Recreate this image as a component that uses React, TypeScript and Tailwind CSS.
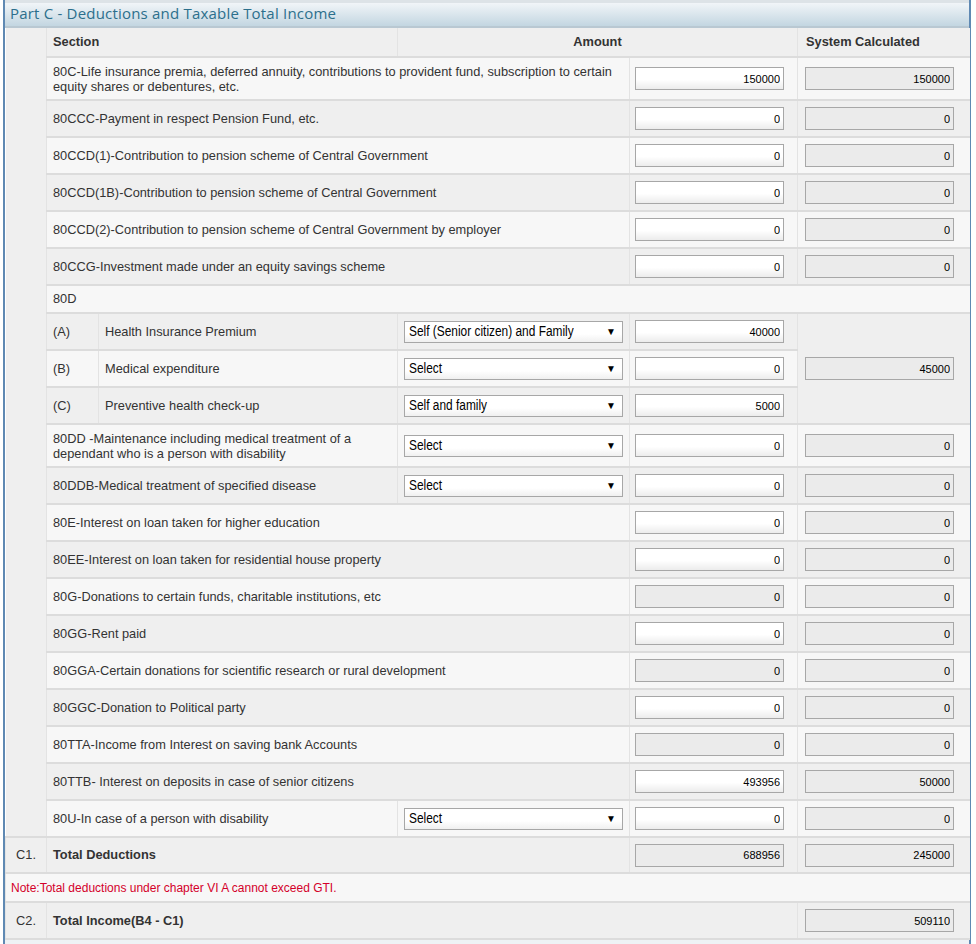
import * as React from "react";

type Row =
  | { kind: "plain"; label: string; amount: string; sys: string; ro?: boolean }
  | { kind: "select"; label: string; option: string; amount: string; sys: string };

const topRows: Row[] = [
  {
    kind: "plain",
    label:
      "80C-Life insurance premia, deferred annuity, contributions to provident fund, subscription to certain equity shares or debentures, etc.",
    amount: "150000",
    sys: "150000",
  },
  { kind: "plain", label: "80CCC-Payment in respect Pension Fund, etc.", amount: "0", sys: "0" },
  { kind: "plain", label: "80CCD(1)-Contribution to pension scheme of Central Government", amount: "0", sys: "0" },
  { kind: "plain", label: "80CCD(1B)-Contribution to pension scheme of Central Government", amount: "0", sys: "0" },
  { kind: "plain", label: "80CCD(2)-Contribution to pension scheme of Central Government by employer", amount: "0", sys: "0" },
  { kind: "plain", label: "80CCG-Investment made under an equity savings scheme", amount: "0", sys: "0" },
];

const subRows = [
  { tag: "(A)", label: "Health Insurance Premium", option: "Self (Senior citizen) and Family", amount: "40000" },
  { tag: "(B)", label: "Medical expenditure", option: "Select", amount: "0" },
  { tag: "(C)", label: "Preventive health check-up", option: "Self and family", amount: "5000" },
];

const bottomRows: Row[] = [
  {
    kind: "select",
    label: "80DD -Maintenance including medical treatment of a dependant who is a person with disability",
    option: "Select",
    amount: "0",
    sys: "0",
  },
  { kind: "select", label: "80DDB-Medical treatment of specified disease", option: "Select", amount: "0", sys: "0" },
  { kind: "plain", label: "80E-Interest on loan taken for higher education", amount: "0", sys: "0" },
  { kind: "plain", label: "80EE-Interest on loan taken for residential house property", amount: "0", sys: "0" },
  { kind: "plain", label: "80G-Donations to certain funds, charitable institutions, etc", amount: "0", sys: "0", ro: true },
  { kind: "plain", label: "80GG-Rent paid", amount: "0", sys: "0" },
  { kind: "plain", label: "80GGA-Certain donations for scientific research or rural development", amount: "0", sys: "0", ro: true },
  { kind: "plain", label: "80GGC-Donation to Political party", amount: "0", sys: "0" },
  { kind: "plain", label: "80TTA-Income from Interest on saving bank Accounts", amount: "0", sys: "0", ro: true },
  { kind: "plain", label: "80TTB- Interest on deposits in case of senior citizens", amount: "493956", sys: "50000" },
  { kind: "select", label: "80U-In case of a person with disability", option: "Select", amount: "0", sys: "0" },
];

const LIGHT = "bg-[#f7f7f7]";
const DARK = "bg-[#efefef]";
const cell = "border-b-2 border-b-[#dcdcdc] border-l border-l-[#e3e3e3] align-middle";

function NumBox({ value, ro }: { value: string; ro?: boolean }) {
  return (
    <input
      readOnly
      value={value}
      className={`block h-[23px] w-[149px] border border-[#a7a7a7] pr-[3px] text-right text-[11px] text-black outline-none ${
        ro ? "bg-[#ebebeb]" : "bg-linear-to-b from-white from-55% to-[#ececec]"
      }`}
      style={{ fontFamily: '"Liberation Sans", Arial, sans-serif' }}
    />
  );
}

function SelectBox({ value }: { value: string }) {
  return (
    <div className="flex h-[22px] w-[219px] items-center justify-between overflow-hidden border border-[#a7a7a7] bg-linear-to-b from-white from-60% to-[#f0f0f0] pl-[4px] pr-[6px] text-[14px] text-black">
      <span className="origin-left scale-x-[0.85] whitespace-nowrap">{value}</span>
      <span className="text-[10px] leading-none">▼</span>
    </div>
  );
}

export default function App() {
  let stripe = 0;
  const bg = () => (stripe++ % 2 === 0 ? LIGHT : DARK);

  return (
    <div
      className="min-h-screen bg-white text-[12.8px] text-[#333]"
      style={{ fontFamily: '"Liberation Sans", Arial, sans-serif' }}
    >
      <div className="ml-[3px] w-[968px] border-x-2 border-x-[#5f89b3]">
        <div
          className="flex h-[28px] items-center border-t-[3px] border-t-[#dde3e7] border-b-2 border-b-[#b9c8d2] bg-linear-to-b from-[#f1f5f8] to-[#c3d6e1] pl-[5px] pb-[2px] text-[15px] tracking-[0.2px] text-[#2c6f8c]"
          style={{ fontFamily: '"Open Sans", Lato, sans-serif' }}
        >
          Part C - Deductions and Taxable Total Income
        </div>

        <table className="w-[964px] table-fixed border-collapse">
          <colgroup>
            <col className="w-[41px]" />
            <col className="w-[52px]" />
            <col className="w-[299px]" />
            <col className="w-[232px]" />
            <col className="w-[168px]" />
            <col className="w-[172px]" />
          </colgroup>
          <tbody>
            <tr className="h-[29px]">
              <td rowSpan={22} className={`${DARK} border-b-2 border-b-[#dcdcdc]`} />
              <td colSpan={2} className={`${cell} ${DARK} px-[6px] font-bold`}>
                Section
              </td>
              <td colSpan={2} className={`${cell} ${DARK} text-center font-bold`}>
                Amount
              </td>
              <td className={`${cell} ${DARK} px-[8px] font-bold`}>System Calculated</td>
            </tr>

            {topRows.map((r) => {
              const b = bg();
              return (
                <tr key={r.label} className={r.label.length > 100 ? "h-[43px]" : "h-[37px]"}>
                  <td colSpan={3} className={`${cell} ${b} px-[6px] leading-[15px]`}>
                    {r.label}
                  </td>
                  <td className={`${cell} ${b} px-[5px]`}>
                    <NumBox value={r.amount} ro={r.kind === "plain" && r.ro} />
                  </td>
                  <td className={`${cell} ${b} px-[7px]`}>
                    <NumBox value={r.sys} ro />
                  </td>
                </tr>
              );
            })}

            {(() => {
              const b = bg();
              return (
                <tr className="h-[28px]">
                  <td colSpan={5} className={`${cell} ${b} px-[6px]`}>
                    80D
                  </td>
                </tr>
              );
            })()}

            {subRows.map((s, i) => {
              const b = bg();
              return (
                <tr key={s.tag} className="h-[37px]">
                  <td className={`${cell} ${b} px-[6px]`}>{s.tag}</td>
                  <td className={`${cell} ${b} px-[6px]`}>{s.label}</td>
                  <td className={`${cell} ${b} px-[6px]`}>
                    <SelectBox value={s.option} />
                  </td>
                  <td className={`${cell} ${b} px-[5px]`}>
                    <NumBox value={s.amount} />
                  </td>
                  {i === 0 && (
                    <td rowSpan={3} className={`${cell} ${DARK} px-[7px]`}>
                      <NumBox value="45000" ro />
                    </td>
                  )}
                </tr>
              );
            })}

            {bottomRows.map((r) => {
              const b = bg();
              const tall = r.label.length > 70 && r.kind === "select";
              return (
                <tr key={r.label} className={tall ? "h-[43px]" : "h-[37px]"}>
                  {r.kind === "select" ? (
                    <>
                      <td colSpan={2} className={`${cell} ${b} px-[6px] leading-[15px]`}>
                        {r.label}
                      </td>
                      <td className={`${cell} ${b} px-[6px]`}>
                        <SelectBox value={r.option} />
                      </td>
                    </>
                  ) : (
                    <td colSpan={3} className={`${cell} ${b} px-[6px] leading-[15px]`}>
                      {r.label}
                    </td>
                  )}
                  <td className={`${cell} ${b} px-[5px]`}>
                    <NumBox value={r.amount} ro={r.kind === "plain" && r.ro} />
                  </td>
                  <td className={`${cell} ${b} px-[7px]`}>
                    <NumBox value={r.sys} ro />
                  </td>
                </tr>
              );
            })}

            <tr className="h-[36px]">
              <td className={`${cell} ${DARK} text-center`}>C1.</td>
              <td colSpan={3} className={`${cell} ${DARK} px-[6px] font-bold`}>
                Total Deductions
              </td>
              <td className={`${cell} ${DARK} px-[5px]`}>
                <NumBox value="688956" ro />
              </td>
              <td className={`${cell} ${DARK} px-[7px]`}>
                <NumBox value="245000" ro />
              </td>
            </tr>
            <tr className="h-[29px]">
              <td colSpan={6} className={`${cell} ${LIGHT} px-[5px] text-[12px] text-[#d4002a]`}>
                Note:Total deductions under chapter VI A cannot exceed GTI.
              </td>
            </tr>
            <tr className="h-[37px]">
              <td className={`${cell} ${DARK} text-center`}>C2.</td>
              <td colSpan={4} className={`${cell} ${DARK} px-[6px] font-bold`}>
                Total Income(B4 - C1)
              </td>
              <td className={`${cell} ${DARK} px-[7px]`}>
                <NumBox value="509110" ro />
              </td>
            </tr>
          </tbody>
        </table>
        <div className="h-[6px] bg-[#eef2f5]" />
      </div>
    </div>
  );
}
